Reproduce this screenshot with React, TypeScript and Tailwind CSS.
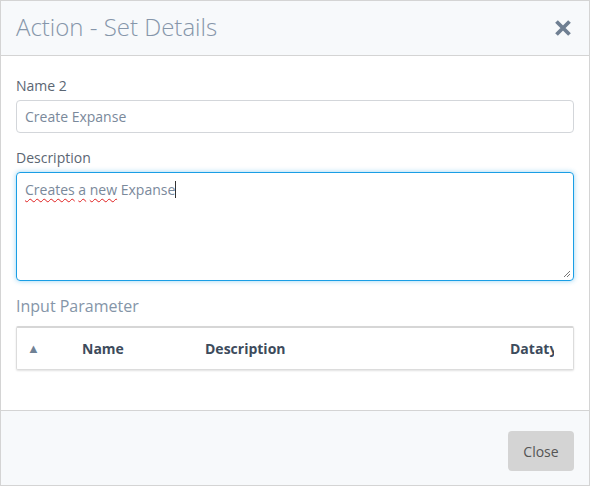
import React from "react";

const font = { fontFamily: '"Open Sans", "Liberation Sans", sans-serif' };

function CloseIcon() {
  return (
    <svg width="18" height="18" viewBox="0 0 18 18" className="text-[#6f7f92]">
      <path d="M2.5 2.5 L15.5 15.5 M15.5 2.5 L2.5 15.5" stroke="currentColor" strokeWidth="3.8" strokeLinecap="butt" />
    </svg>
  );
}

function Squiggle({ children }: { children: React.ReactNode }) {
  return <span className="underline decoration-wavy decoration-[#e02020] decoration-1 underline-offset-[3px]">{children}</span>;
}

export default function App() {
  return (
    <div style={font} className="w-[590px] h-[486px] bg-white border border-[#d4d4d4] flex flex-col">
      {/* Header */}
      <div className="h-[55px] shrink-0 bg-[#f7f9fb] border-b border-[#d4d4d4] flex items-center justify-between pl-[15px] pr-[17px]">
        <h2 className="text-[24px] font-light text-[#8696aa] leading-none -mt-[3px]">Action - Set Details</h2>
        <CloseIcon />
      </div>

      {/* Body */}
      <div className="flex-1 px-[15px] pt-[20px]">
        <label className="block text-[14px] leading-[20px] text-[#5b6673] mb-1">Name 2</label>
        <div className="h-[33px] border border-[#d3d6da] rounded-[4px] flex items-center pl-2 text-[14px] text-[#7a899b]">
          Create Expanse
        </div>

        <label className="block text-[14px] leading-[20px] text-[#5b6673] mt-[15px] mb-1">Description</label>
        <div className="relative h-[109px] border border-[#1a9ee5] rounded-[4px] shadow-[0_0_5px_rgba(26,158,229,0.45)] pl-2 pt-[7px] text-[14px] leading-[20px] text-[#7a899b]">
          <Squiggle>Creates</Squiggle> <Squiggle>a</Squiggle> <Squiggle>new</Squiggle> Expanse
          <span className="inline-block w-px h-[17px] bg-[#333] align-[-3px]" />
          <svg width="8" height="8" viewBox="0 0 8 8" className="absolute right-[2px] bottom-[2px]">
            <path d="M7 1 L1 7 M7 4 L4 7" stroke="#777" strokeWidth="1" />
          </svg>
        </div>

        <div className="text-[16px] leading-[24px] text-[#8595a8] mt-[13px] mb-[8px]">Input Parameter</div>
        <div className="h-[44px] border border-[#dcdcdc] border-t-2 border-t-[#d6d6d6] rounded-[2px] shadow-[0_1px_2px_rgba(0,0,0,0.12)] flex items-center text-[14px] font-bold text-[#3d4b5c]">
          <div className="w-[65px] pl-[10px] text-[13px] text-[#6f8195] font-normal">▲</div>
          <div className="w-[123px]">Name</div>
          <div className="w-[305px]">Description</div>
          <div className="w-[44px] overflow-hidden whitespace-nowrap">Datatype</div>
        </div>
      </div>

      {/* Footer */}
      <div className="h-[75px] shrink-0 bg-[#f7f9fb] border-t border-[#d4d4d4] flex items-start justify-end pt-[20px] pr-[15px]">
        <button className="w-[66px] h-[40px] bg-[#d4d4d4] rounded-[4px] text-[14px] text-[#555]">Close</button>
      </div>
    </div>
  );
}
